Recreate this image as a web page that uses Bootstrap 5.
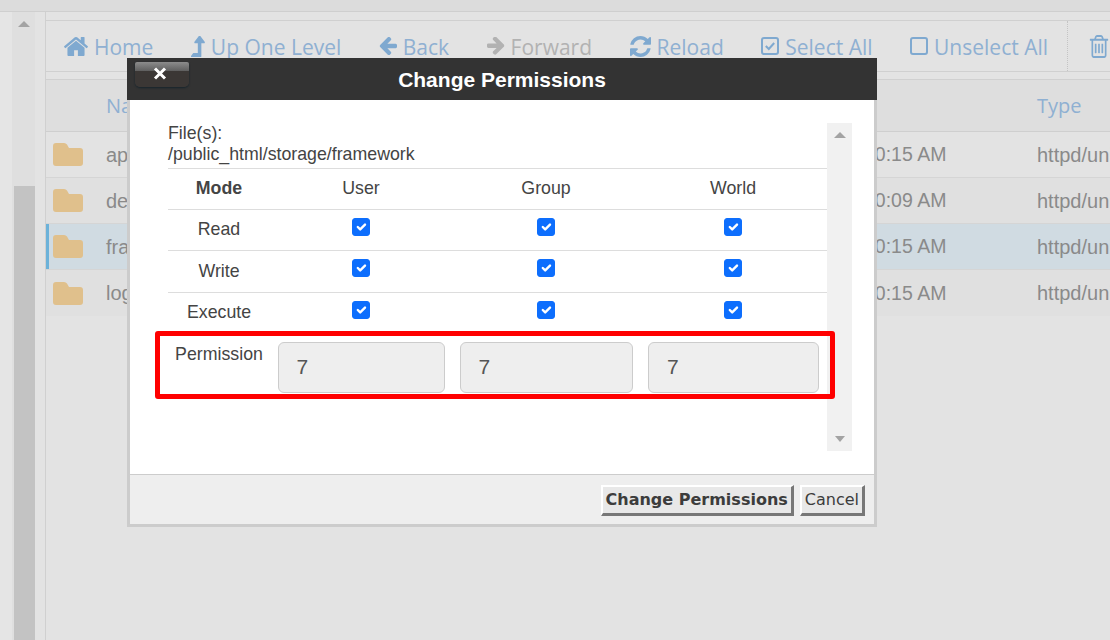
<!DOCTYPE html>
<html lang="en">
<head>
<meta charset="utf-8">
<title>Change Permissions</title>
<link href="https://cdn.jsdelivr.net/npm/bootstrap@5.3.0/dist/css/bootstrap.min.css" rel="stylesheet">
<style>
html,body{height:100%}
body{width:1110px;height:640px;overflow:hidden;background:#e3e3e3;font-family:"Liberation Sans",Arial,sans-serif;position:relative}
.top-strip{height:12px;background:#dcdcdc;border-bottom:1px solid #cfcfcf}
.page-row{height:628px;overflow:hidden}
.gutter{width:12px;background:#e5e5e5}
.page-scroll{width:23px;background:#dfdfdf;display:flex;flex-direction:column}
.page-arrow{height:174px;padding-top:9px;flex:none}
.tri-up{width:0;height:0;border-left:6px solid transparent;border-right:6px solid transparent;border-bottom:6px solid #a3a3a3}
.tri-down{width:0;height:0;border-left:5.5px solid transparent;border-right:5.5px solid transparent;border-top:6px solid #a3a3a3}
.page-thumb{margin-left:2px;background:#c3c3c3;flex:1}
.gap-col{width:10px}
.main-col{width:1065px;border-left:1px solid #d0d0d0;padding-top:8px;overflow:hidden}
.tool-bar{height:52px;border:solid #d0d0d0;border-width:1px 0;padding-left:18px;gap:37.5px;font-family:"Open Sans",sans-serif;font-size:21px;color:#8fb0d2;white-space:nowrap;overflow:hidden}
.tool-item{display:flex;align-items:center;gap:6px}
.tool-item span{padding-top:3px}
.tool-item svg{fill:#7fa9d0;display:block;flex:none}
.tool-off{color:#b2b2b2}
.tool-off svg{fill:#b2b2b2}
.tool-sep{border-left:1px dotted #c4c4c4;height:100%;padding-left:21px;margin-left:-18.5px;display:flex;align-items:center}
.file-list{margin-top:7px;border-top:1px solid #d0d0d0;font-size:20px;color:#8a8a8a}
.list-head{height:52px;background:#dedede;border-bottom:1px solid #cfcfcf;font-family:"Open Sans",sans-serif;color:#8fb0d2}
.list-line{height:46px;border-bottom:1px solid #d5d5d5;white-space:nowrap}
.line-even{background:#e0e0e0}
.line-sel{background:#d0dbe2;box-shadow:inset 3px 0 0 #6cb2d9}
.cell-icon{width:60px;padding-left:7px;flex:none}
.cell-name{width:758px;flex:none}
.cell-time{width:173px;flex:none;font-size:19.5px;padding-top:1px}
.dialog-box{position:absolute;left:127px;top:58px;width:750px;height:469px;background:#eee;display:flex;flex-direction:column;color:#444}
.dialog-title{height:42px;background:#333;color:#fff;font-size:21px;font-weight:700;position:relative;flex:none;padding-top:1px}
.close-x{position:absolute;left:8px;top:4px;width:54px;height:25px;border-radius:2px 2px 5px 5px;background:linear-gradient(#8c8c8c,#5f5f5f 36%,#3b3735 37%,#3b3735);box-shadow:0 1px 2px #16242c;color:#fff;display:flex;justify-content:center;padding:5px 4px 0 0}
.dialog-body{height:375px;flex:none;background:#fff;border:solid #ccc;border-width:0 3px 1px;padding:23px 22px 0 38px;position:relative}
.dialog-scroll{width:25px;height:328px;background:#f1f1f1;flex:none;padding:9px 0}
.dialog-main{width:659px;font-size:17.75px;line-height:21px;flex:none}
.file-info{height:45px}
.perm-grid{width:659px;table-layout:fixed;margin:0;color:#444;font-size:17.75px}
.perm-grid td{border-top:1px solid #ddd;border-bottom:0;padding:0;text-align:center;vertical-align:middle;height:41px;line-height:1;box-shadow:none;background:none}
.perm-grid tr:nth-child(3) td{height:42px}
.perm-grid td:last-child{padding-right:1px}
.perm-grid .form-check-input{width:18px;height:18px;margin:0 auto 6px;display:block;border-radius:3px;--bs-form-check-bg-image:url("data:image/svg+xml,%3csvg xmlns='http://www.w3.org/2000/svg' viewBox='0 0 20 20'%3e%3cpath fill='none' stroke='%23fff' stroke-linecap='round' stroke-linejoin='round' stroke-width='3.6' d='m5 10 3.5 3.5L15 6'/%3e%3c/svg%3e")}
.perm-grid tr:nth-child(3) .form-check-input{margin-bottom:8px}
.perm-values{padding-top:8px}
.perm-name{width:102px;text-align:center;padding-top:2px;flex:none}
.perm-cell{flex:none;display:flex;justify-content:center}
.perm-input{height:51px;border:1px solid #ccc;border-radius:6px;background:#eee;color:#555;font-size:21px;padding:6px 18px}
.wide-col1{width:102px}.wide-a{width:182px}.wide-b{width:188px}.wide-c{width:187px}
.fill-a{width:167px}.fill-b{width:173px}.fill-c{width:171px}
.red-mark{position:absolute;left:25px;top:231px;width:680px;height:68px;border:5px solid #f00;border-radius:3px;pointer-events:none}
.dialog-foot{flex:1;border:solid #ccc;border-width:0 3px 3px;padding:10px 9px 0 0;gap:6px;font-family:"DejaVu Sans",sans-serif}
.foot-btn{height:31px;background:#e8e8e8;color:#3c3c3c;border-style:solid;border-width:2px 3px 3px 2px;border-color:#fff #777 #777 #fff;border-radius:0;padding:0 3px;line-height:24px;font-size:16px;font-family:inherit;--bs-btn-hover-bg:#e8e8e8}
</style>
</head>
<body>
<div class="top-strip"></div>
<div class="page-row d-flex">
  <div class="gutter"></div>
  <div class="page-scroll">
    <div class="page-arrow d-flex justify-content-center"><div class="tri-up"></div></div>
    <div class="page-thumb"></div>
  </div>
  <div class="gap-col"></div>
  <div class="main-col">
    <div class="tool-bar d-flex align-items-center">
      <div class="tool-item"><svg width="24" height="19" viewBox="96 256 1600 1280"><path d="M1472 992v480q0 26-19 45t-45 19h-384v-384h-256v384h-384q-26 0-45-19t-19-45v-480q0-1 .5-3t.5-3l575-474 575 474q1 2 1 6zm223-69l-62 74q-8 9-21 11h-3q-13 0-21-7l-692-577-692 577q-12 8-24 7-13-2-21-11l-62-74q-8-10-7-23.5t11-21.5l719-599q32-26 76-26t76 26l244 204v-195q0-14 9-23t23-9h192q14 0 23 9t9 23v408l219 182q10 8 11 21.5t-7 23.5z"/></svg><span>Home</span></div>
      <div class="tool-item"><svg width="14" height="21" viewBox="395 60 1015 1385" preserveAspectRatio="none"><path d="M1395 508q-17 36-58 36h-192v864q0 14-9 23t-23 9h-704q-21 0-29-18-8-20 4-35l160-192q9-11 25-11h320v-640h-192q-40 0-58-36-17-37 9-68l320-384q18-22 49-22t49 22l320 384q27 32 9 68z"/></svg><span>Up One Level</span></div>
      <div class="tool-item"><svg width="18" height="18" viewBox="128 224 1536 1472"><path d="M1664 896v128q0 53-32.5 90.5t-84.5 37.5h-704l293 294q38 36 38 90t-38 90l-75 76q-37 37-90 37-52 0-91-37l-651-652q-37-37-37-90 0-52 37-91l651-650q38-38 91-38 52 0 90 38l75 74q38 38 38 91t-38 91l-293 293h704q52 0 84.5 37.5t32.5 90.5z"/></svg><span>Back</span></div>
      <div class="tool-item tool-off"><svg width="18" height="18" viewBox="128 224 1536 1536"><path d="M1600 960q0 54-37 91l-651 651q-39 37-91 37-51 0-90-37l-75-75q-38-38-38-91t38-91l293-293h-704q-52 0-84.5-37.5t-32.5-90.5v-128q0-53 32.5-90.5t84.5-37.5h704l-293-294q-38-36-38-90t38-90l75-75q38-38 90-38 53 0 91 38l651 651q37 35 37 90z"/></svg><span>Forward</span></div>
      <div class="tool-item"><svg width="21" height="21" viewBox="128 128 1536 1536"><path d="M1639 1056q0 5-1 7-64 268-268 434.5t-478 166.5q-146 0-282.5-55t-243.5-157l-129 129q-19 19-45 19t-45-19-19-45v-448q0-26 19-45t45-19h448q26 0 45 19t19 45-19 45l-137 137q71 66 161 102t187 36q134 0 250-65t186-179q11-17 53-117 8-23 30-23h192q13 0 22.5 9.5t9.5 22.5zm25-800v448q0 26-19 45t-45 19h-448q-26 0-45-19t-19-45 19-45l138-138q-148-137-349-137-134 0-250 65t-186 179q-11 17-53 117-8 23-30 23h-199q-13 0-22.5-9.5t-9.5-22.5v-7q65-268 270-434.5t480-166.5q146 0 284 55.5t245 156.5l130-129q19-19 45-19t45 19 19 45z"/></svg><span>Reload</span></div>
      <div class="tool-item"><svg width="18" height="18" viewBox="0 0 18 18"><rect x="1" y="1" width="16" height="16" rx="2" fill="none" stroke="#7fa9d0" stroke-width="2"/><path d="M4.8 9l3 3 5.4-6" fill="none" stroke="#7fa9d0" stroke-width="2"/></svg><span>Select All</span></div>
      <div class="tool-item"><svg width="18" height="18" viewBox="0 0 18 18"><rect x="1" y="1" width="16" height="16" rx="2" fill="none" stroke="#7fa9d0" stroke-width="2"/></svg><span>Unselect All</span></div>
      <div class="tool-sep"><svg width="20" height="23" viewBox="128 128 1536 1536" preserveAspectRatio="none" fill="#7fa9d0" class="d-block"><path d="M704 736v576q0 14-9 23t-23 9h-64q-14 0-23-9t-9-23v-576q0-14 9-23t23-9h64q14 0 23 9t9 23zm256 0v576q0 14-9 23t-23 9h-64q-14 0-23-9t-9-23v-576q0-14 9-23t23-9h64q14 0 23 9t9 23zm256 0v576q0 14-9 23t-23 9h-64q-14 0-23-9t-9-23v-576q0-14 9-23t23-9h64q14 0 23 9t9 23zm128 724v-948h-896v948q0 22 7 40.5t14.5 27 10.5 8.5h832q3 0 10.5-8.5t14.5-27 7-40.5zm-672-1076h448l-48-117q-7-9-17-11h-317q-10 2-17 11zm928 32v64q0 14-9 23t-23 9h-96v948q0 83-47 143.5t-113 60.5h-832q-66 0-113-58.5t-47-141.5v-952h-96q-14 0-23-9t-9-23v-64q0-14 9-23t23-9h309l70-167q15-37 54-63t79-26h320q40 0 79 26t54 63l70 167h309q14 0 23 9t9 23z"/></svg></div>
    </div>
    <div class="file-list">
      <div class="list-head d-flex align-items-center"><div class="cell-icon"></div><div class="cell-name">Name</div><div class="cell-time"></div><div>Type</div></div>
      <div class="list-line d-flex align-items-center"><div class="cell-icon"><svg width="30" height="23" viewBox="0 0 30 23" fill="#e0c08c" class="d-block"><path d="M0 3q0-3 3-3h8q2 0 3 1.5L16 5h11q3 0 3 3v12q0 3-3 3H3q-3 0-3-3z"/></svg></div><div class="cell-name">app</div><div class="cell-time">10:15 AM</div><div>httpd/unix-directory</div></div>
      <div class="list-line line-even d-flex align-items-center"><div class="cell-icon"><svg width="30" height="23" viewBox="0 0 30 23" fill="#e0c08c" class="d-block"><path d="M0 3q0-3 3-3h8q2 0 3 1.5L16 5h11q3 0 3 3v12q0 3-3 3H3q-3 0-3-3z"/></svg></div><div class="cell-name">default</div><div class="cell-time">10:09 AM</div><div>httpd/unix-directory</div></div>
      <div class="list-line line-sel d-flex align-items-center"><div class="cell-icon"><svg width="30" height="23" viewBox="0 0 30 23" fill="#e0c08c" class="d-block"><path d="M0 3q0-3 3-3h8q2 0 3 1.5L16 5h11q3 0 3 3v12q0 3-3 3H3q-3 0-3-3z"/></svg></div><div class="cell-name">framework</div><div class="cell-time">10:15 AM</div><div>httpd/unix-directory</div></div>
      <div class="list-line line-even d-flex align-items-center border-0"><div class="cell-icon"><svg width="30" height="23" viewBox="0 0 30 23" fill="#e0c08c" class="d-block"><path d="M0 3q0-3 3-3h8q2 0 3 1.5L16 5h11q3 0 3 3v12q0 3-3 3H3q-3 0-3-3z"/></svg></div><div class="cell-name">logs</div><div class="cell-time">10:15 AM</div><div>httpd/unix-directory</div></div>
    </div>
  </div>
</div>

<div class="dialog-box">
  <div class="dialog-title d-flex align-items-center justify-content-center">
    <div class="close-x"><svg width="14" height="13" viewBox="0 0 14 13" class="d-block"><path d="M2 1.5l10 10M12 1.5l-10 10" stroke="#fff" stroke-width="3" fill="none"/></svg></div>
    <span>Change Permissions</span>
  </div>
  <div class="dialog-body d-flex">
    <div class="dialog-main">
      <div class="file-info">File(s):<br>/public_html/storage/framework</div>
      <table class="table perm-grid">
        <colgroup><col class="wide-col1"><col class="wide-a"><col class="wide-b"><col class="wide-c"></colgroup>
        <tr><td><strong>Mode</strong></td><td>User</td><td>Group</td><td>World</td></tr>
        <tr><td>Read</td><td><input class="form-check-input" type="checkbox" checked aria-label="Read user"></td><td><input class="form-check-input" type="checkbox" checked aria-label="Read group"></td><td><input class="form-check-input" type="checkbox" checked aria-label="Read world"></td></tr>
        <tr><td>Write</td><td><input class="form-check-input" type="checkbox" checked aria-label="Write user"></td><td><input class="form-check-input" type="checkbox" checked aria-label="Write group"></td><td><input class="form-check-input" type="checkbox" checked aria-label="Write world"></td></tr>
        <tr><td>Execute</td><td><input class="form-check-input" type="checkbox" checked aria-label="Execute user"></td><td><input class="form-check-input" type="checkbox" checked aria-label="Execute group"></td><td><input class="form-check-input" type="checkbox" checked aria-label="Execute world"></td></tr>
      </table>
      <div class="perm-values d-flex">
        <div class="perm-name">Permission</div>
        <div class="perm-cell wide-a"><input class="perm-input fill-a" value="7" readonly aria-label="User"></div>
        <div class="perm-cell wide-b"><input class="perm-input fill-b" value="7" readonly aria-label="Group"></div>
        <div class="perm-cell wide-c"><input class="perm-input fill-c" value="7" readonly aria-label="World"></div>
      </div>
    </div>
    <div class="dialog-scroll d-flex flex-column justify-content-between align-items-center"><div class="tri-up"></div><div class="tri-down"></div></div>
    <div class="red-mark"></div>
  </div>
  <div class="dialog-foot d-flex justify-content-end align-items-start">
    <button class="btn foot-btn fw-bold" type="button">Change Permissions</button>
    <button class="btn foot-btn" type="button">Cancel</button>
  </div>
</div>
</body>
</html>
